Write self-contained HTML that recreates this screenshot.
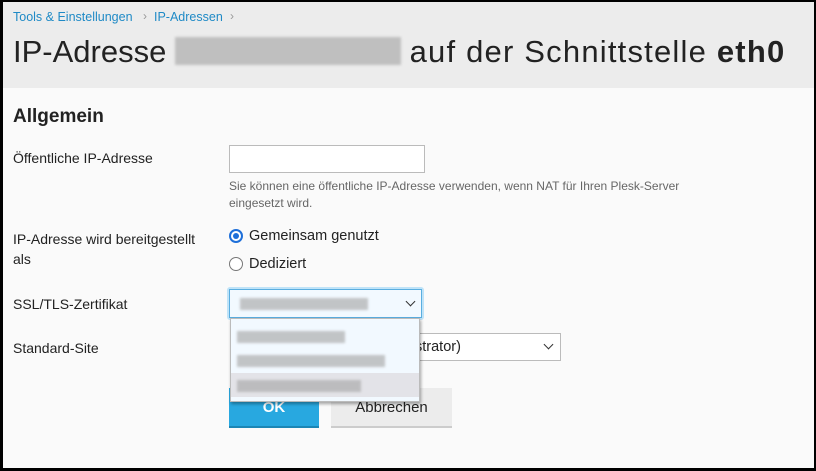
<!DOCTYPE html>
<html><head><meta charset="utf-8"><style>
*{box-sizing:border-box;margin:0;padding:0}
body{width:816px;height:471px;overflow:hidden;background:#000;font-family:"Liberation Sans",sans-serif;color:#222;position:relative}
#f{position:absolute;left:3px;top:2px;width:811px;height:466px;background:#fafafa;overflow:hidden}
#hd{position:absolute;left:0;top:0;width:100%;height:86px;background:#ececec}
.a{position:absolute;white-space:nowrap}
.bc{font-size:12.5px;color:#1f8ac6;top:8px}
.lbl{font-size:14px;color:#222}
.blur{display:inline-block;background:#a8a8a8;filter:blur(1.2px);opacity:.65}
.sel{position:absolute;border:1px solid #bbb;background:#fff}
.chev{position:absolute;width:7px;height:7px;border-right:1.6px solid #333;border-bottom:1.6px solid #333;transform:rotate(45deg)}
</style></head><body><div id="f">
<div id="hd">
<div class="a bc" style="left:10px">Tools &amp; Einstellungen</div>
<div class="a" style="left:140px;top:7px;font-size:12px;color:#999">›</div>
<div class="a bc" style="left:151px">IP-Adressen</div>
<div class="a" style="left:227px;top:7px;font-size:12px;color:#999">›</div>
<div class="a" style="left:10px;top:32px;font-size:31px;color:#222">IP-Adresse <span class="blur" style="width:226px;height:28px;vertical-align:-3px"></span> <span style="letter-spacing:1.2px">auf der Schnittstelle <b style="font-weight:600">eth0</b></span></div>
</div>
<div class="a" style="left:10px;top:104px;font-size:19px;font-weight:bold">Allgemein</div>
<div class="a lbl" style="left:10px;top:148px">Öffentliche IP-Adresse</div>
<div class="sel" style="left:226px;top:143px;width:196px;height:28px;border-color:#bbb"></div>
<div class="a" style="left:226px;top:176px;font-size:12px;color:#666;line-height:17px">Sie können eine öffentliche IP-Adresse verwenden, wenn NAT für Ihren Plesk-Server<br>eingesetzt wird.</div>
<div class="a lbl" style="left:10px;top:227px;line-height:20px">IP-Adresse wird bereitgestellt<br>als</div>
<div class="a" style="left:226px;top:227px;width:14px;height:14px;border:2px solid #1e6fd9;border-radius:50%;background:#fff"><div style="position:absolute;left:2px;top:2px;width:6px;height:6px;border-radius:50%;background:#1e6fd9"></div></div>
<div class="a lbl" style="left:246px;top:226px;font-size:14.5px">Gemeinsam genutzt</div>
<div class="a" style="left:226px;top:255px;width:14px;height:14px;border:1.5px solid #777;border-radius:50%;background:#fff"></div>
<div class="a lbl" style="left:246px;top:254px;font-size:14.5px">Dediziert</div>
<div class="a lbl" style="left:10px;top:294px">SSL/TLS-Zertifikat</div>
<div class="a lbl" style="left:10px;top:338px">Standard-Site</div>
<div class="sel" style="left:326px;top:331px;width:232px;height:28px"></div>
<div class="a lbl" style="left:412px;top:337px;font-size:14.5px">strator)</div>
<div class="chev" style="left:542px;top:339px"></div>
<div class="a" style="left:226px;top:386px;width:90px;height:40px;background:#28a8e0;border-bottom:2px solid #1b86b5;color:#fff;font-weight:bold;font-size:15px;text-align:center;line-height:40px">OK</div>
<div class="a" style="left:328px;top:386px;width:121px;height:40px;background:#ececec;border-bottom:2px solid #ccc;font-size:15px;text-align:center;line-height:40px">Abbrechen</div>
<div class="a" style="left:224px;top:285px;width:197px;height:33px;border:3px solid #bfe3f8;border-radius:3px"></div>
<div class="sel" style="left:226px;top:287px;width:193px;height:29px;border-color:#5aaee0;background:#f2f9ff"></div>
<div class="a" style="left:237px;top:295px"><span class="blur" style="width:128px;height:12px"></span></div>
<div class="chev" style="left:404px;top:296px"></div>
<div class="a" style="left:227px;top:316px;width:190px;height:84px;background:#f2f9ff;border:1px solid #bbb;box-shadow:1px 2px 3px rgba(0,0,0,.35)">
<div style="position:absolute;left:6px;top:11px"><span class="blur" style="width:108px;height:12px"></span></div>
<div style="position:absolute;left:6px;top:35px"><span class="blur" style="width:148px;height:12px"></span></div>
<div style="position:absolute;left:0;top:54px;width:188px;height:24px;background:#e3e3e8"></div>
<div style="position:absolute;left:6px;top:60px"><span class="blur" style="width:124px;height:12px"></span></div>
</div>
</div></body></html>
